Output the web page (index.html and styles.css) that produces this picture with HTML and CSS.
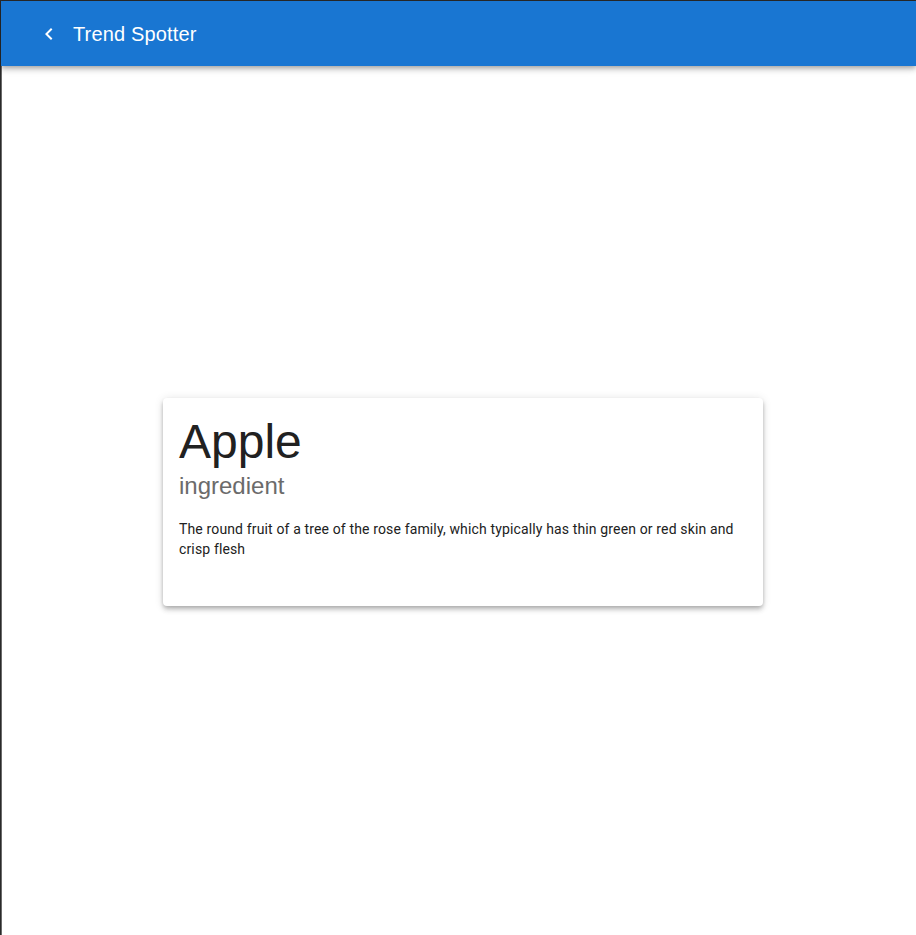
FILE: index.html
```html
<!DOCTYPE html>
<html lang="en">
<head>
<meta charset="utf-8">
<title>Trend Spotter</title>
<link rel="stylesheet" href="styles.css">
</head>
<body>
<div class="app">
  <header class="toolbar">
    <button class="back" aria-label="Back">
      <svg viewBox="0 0 24 24" width="24" height="24"><path fill="#fff" d="M15.41 7.41L14 6l-6 6 6 6 1.41-1.41L10.83 12z"/></svg>
    </button>
    <span class="title">Trend Spotter</span>
  </header>
  <main class="content">
    <section class="card">
      <h1 class="card-title">Apple</h1>
      <h2 class="card-subtitle">ingredient</h2>
      <p class="card-text">The round fruit of a tree of the rose family, which typically has thin green or red skin and crisp flesh</p>
    </section>
  </main>
</div>
</body>
</html>
```
FILE: styles.css
```css
html, body {
  margin: 0;
  padding: 0;
  height: 100%;
  background: #fff;
}
body {
  font-family: "Liberation Sans", Arial, sans-serif;
  color: #212121;
}
.app {
  box-sizing: border-box;
  height: 100%;
  display: flex;
  flex-direction: column;
  border-top: 1px solid #2a2a2a;
  border-left: 1px solid #2a2a2a;
  box-shadow: inset 1px 0 0 #6a6a6a;
}
.toolbar {
  position: relative;
  z-index: 2;
  height: 65px;
  flex: 0 0 65px;
  background: #1976d2;
  color: #fff;
  display: flex;
  align-items: center;
  padding-left: 36px;
  box-shadow: 0 2px 4px -1px rgba(0,0,0,.2), 0 4px 5px 0 rgba(0,0,0,.14), 0 1px 10px 0 rgba(0,0,0,.12);
}
.back {
  width: 24px;
  height: 24px;
  padding: 0;
  border: 0;
  background: none;
  display: flex;
  margin-right: 12px;
}
.title {
  font-size: 20px;
  font-weight: 400;
  line-height: 32px;
  letter-spacing: 0.15px;
}
.content {
  flex: 1;
  display: flex;
  align-items: center;
  justify-content: center;
  padding-left: 9px;
  padding-top: 3px;
}
.card {
  box-sizing: border-box;
  width: 600px;
  height: 208px;
  padding: 16px 16px 48px;
  background: #fff;
  border-radius: 4px;
  box-shadow: 0 2px 4px -1px rgba(0,0,0,.2), 0 4px 5px 0 rgba(0,0,0,.14), 0 1px 10px 0 rgba(0,0,0,.12);
}
.card-title {
  margin: 0;
  font-size: 48px;
  font-weight: 400;
  line-height: 56px;
  color: #212121;
}
.card-subtitle {
  margin: 0;
  font-size: 24px;
  font-weight: 400;
  line-height: 32px;
  color: #6b6b6b;
}
.card-text {
  margin: 17px 0 0;
  font-family: Roboto, "Liberation Sans", Arial, sans-serif;
  font-size: 14px;
  line-height: 20px;
  letter-spacing: 0.14px;
  color: #212121;
}
```
